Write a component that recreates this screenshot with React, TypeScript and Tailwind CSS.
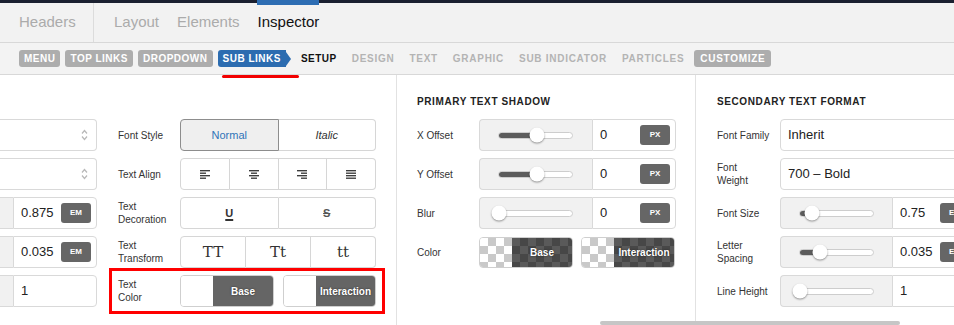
import { FC, ReactNode } from "react";

const navPills: { label: string; kind: "pill" | "active" | "current" | "text" }[] = [
  { label: "MENU", kind: "pill" },
  { label: "TOP LINKS", kind: "pill" },
  { label: "DROPDOWN", kind: "pill" },
  { label: "SUB LINKS", kind: "active" },
  { label: "SETUP", kind: "current" },
  { label: "DESIGN", kind: "text" },
  { label: "TEXT", kind: "text" },
  { label: "GRAPHIC", kind: "text" },
  { label: "SUB INDICATOR", kind: "text" },
  { label: "PARTICLES", kind: "text" },
  { label: "CUSTOMIZE", kind: "pill" },
];

const Label: FC<{ children: ReactNode; w?: string }> = ({ children, w = "w-[62px]" }) => (
  <div className={`${w} shrink-0 text-[10px] leading-[13px] text-[#333]`}>{children}</div>
);

const Badge: FC<{ text: string }> = ({ text }) => (
  <span className="flex h-[20px] w-[30px] shrink-0 items-center justify-center rounded-[3px] bg-[#666] text-[8px] font-bold text-white">
    {text}
  </span>
);

const Slider: FC<{ pct: number; w?: string }> = ({ pct, w = "w-[113px]" }) => (
  <div className={`flex h-full ${w} shrink-0 items-center rounded-l-[4px] border border-r-0 border-[#d9d9d9] bg-[#f1f1f1] pl-[18px]`}>
    <div className="relative h-[7px] w-[75px] rounded-full border border-[#cdcdcd] bg-white">
      <div className="h-full rounded-full bg-[#5c5c5c]" style={{ width: `${pct}%` }} />
      <div
        className="absolute top-1/2 h-[15px] w-[15px] -translate-x-1/2 -translate-y-1/2 rounded-full bg-white shadow-[0_1px_2px_rgba(0,0,0,0.4)]"
        style={{ left: `${pct}%` }}
      />
    </div>
  </div>
);

const ValueBox: FC<{ value: string; badge?: string; w?: string }> = ({ value, badge, w = "w-[84px]" }) => (
  <div className={`flex h-full ${w} shrink-0 items-center justify-between rounded-r-[4px] border border-[#d9d9d9] bg-white pl-[7px] pr-[5px] text-[13px] text-[#222]`}>
    <span>{value}</span>
    {badge && <Badge text={badge} />}
  </div>
);

const Chevrons: FC = () => (
  <svg width="7" height="12" viewBox="0 0 7 12" fill="none" stroke="#b8b8b8" strokeWidth="1.2">
    <path d="M1 4.5 3.5 1.5 6 4.5" />
    <path d="M1 7.5 3.5 10.5 6 7.5" />
  </svg>
);

const AlignIcon: FC<{ mode: "left" | "center" | "right" | "justify" }> = ({ mode }) => {
  const rows = [10, 6, 10, 6];
  return (
    <svg width="10" height="9" viewBox="0 0 10 9" stroke="#333" strokeWidth="1.3">
      {rows.map((len, i) => {
        const l = mode === "justify" ? 10 : len;
        const x = mode === "left" || mode === "justify" ? 0 : mode === "right" ? 10 - l : (10 - l) / 2;
        const y = 0.7 + i * 2.5;
        return <line key={i} x1={x} y1={y} x2={x + l} y2={y} />;
      })}
    </svg>
  );
};

const Segments: FC<{ items: ReactNode[]; active?: number }> = ({ items, active }) => (
  <div className="flex h-full w-[196px] shrink-0">
    {items.map((item, i) => {
      const first = i === 0;
      const last = i === items.length - 1;
      const on = i === active;
      return (
        <div
          key={i}
          className={`flex flex-1 items-center justify-center border-y border-r ${first ? "rounded-l-[4px] border-l" : ""} ${
            last ? "rounded-r-[4px]" : ""
          } ${on ? "border-l border-[#8d8d8d] bg-[#efefef]" : "border-[#d6d6d6] bg-white"}`}
        >
          {item}
        </div>
      );
    })}
  </div>
);

const checkerLight =
  "bg-[image:conic-gradient(#c9c9c9_25%,#ffffff_0_50%,#c9c9c9_0_75%,#ffffff_0)] bg-[length:16px_16px]";
const checkerDark =
  "bg-[image:conic-gradient(#474747_25%,#5a5a5a_0_50%,#474747_0_75%,#5a5a5a_0)] bg-[length:16px_16px]";

const Swatch: FC<{ text: string; checker?: boolean; w?: string }> = ({ text, checker, w = "w-[94px]" }) => (
  <div className={`flex h-full ${w} shrink-0 overflow-hidden rounded-[4px] border border-[#cfcfcf]`}>
    <div className={`w-[32px] shrink-0 ${checker ? checkerLight : "bg-white"}`} />
    <div
      className={`flex flex-1 items-center justify-center text-[10px] font-bold text-white [text-shadow:0_0_2px_rgba(0,0,0,0.6)] ${
        checker ? checkerDark : "bg-[#656565]"
      }`}
    >
      {text}
    </div>
  </div>
);

const CutSelect: FC = () => (
  <div className="flex h-full w-[97px] items-center justify-end rounded-r-[4px] border border-l-0 border-[#d9d9d9] bg-white pr-[8px]">
    <Chevrons />
  </div>
);

const CutNumber: FC<{ value: string; badge?: string }> = ({ value, badge }) => (
  <div className="flex h-full w-[97px]">
    <div className="w-[13px] border-y border-[#d9d9d9] bg-[#f1f1f1]" />
    <ValueBox value={value} badge={badge} />
  </div>
);

const Row: FC<{ children: ReactNode }> = ({ children }) => (
  <div className="flex h-[32px] items-center">{children}</div>
);

const Title: FC<{ children: ReactNode }> = ({ children }) => (
  <div className="h-[12px] text-[10px] font-bold leading-[12px] tracking-[0.6px] text-[#222]">{children}</div>
);

export default function App() {
  return (
    <div className="relative h-[325px] w-[954px] overflow-hidden bg-white font-['Liberation_Sans',Arial,sans-serif]">
      <div className="h-[3px] bg-[#1b2030]" />
      <div className="absolute left-[257px] top-0 h-[5px] w-[62px] bg-[#2d6db3]" />

      {/* top tabs */}
      <div className="flex h-[40px] items-center border-b border-[#d8d8d8] bg-[#f2f2f2] text-[15px]">
        <div className="flex h-full w-[94px] items-center border-r border-[#dcdcdc] pl-[19px] text-[#ababab]">Headers</div>
        <div className="flex items-center gap-[18px] pl-[20px]">
          <span className="text-[#ababab]">Layout</span>
          <span className="text-[#ababab]">Elements</span>
          <span className="text-[#111]">Inspector</span>
        </div>
      </div>

      {/* sub nav */}
      <div className="flex h-[32px] items-center gap-[5px] border-b border-[#d8d8d8] bg-[#f3f3f3] pl-[19px] text-[10px] font-bold tracking-[0.5px]">
        {navPills.map((p) => {
          if (p.kind === "pill")
            return (
              <span
                key={p.label}
                className={`flex h-[17px] items-center rounded-[3px] bg-[#adadad] text-white ${
                  p.label === "CUSTOMIZE" ? "px-[6px] tracking-[0.7px]" : "px-[5px]"
                }`}
              >
                {p.label}
              </span>
            );
          if (p.kind === "active")
            return (
              <span key={p.label} className="flex items-center">
                <span className="flex h-[17px] items-center rounded-l-[3px] bg-[#2c6cb0] px-[5px] text-white">{p.label}</span>
                <span className="h-0 w-0 border-y-[7px] border-l-[5px] border-y-transparent border-l-[#2c6cb0]" />
              </span>
            );
          return (
            <span
              key={p.label}
              className={`px-[5px] ${p.kind === "current" ? "text-[#111]" : "tracking-[0.72px] text-[#b4b4b4]"}`}
            >
              {p.label}
            </span>
          );
        })}
      </div>
      <div className="absolute left-[222px] top-[75px] h-[3px] w-[77px] rounded-full bg-[#f20000]" />

      {/* panels */}
      <div className="flex h-[250px]">
        <div className="flex w-[397px] shrink-0 flex-col gap-[7px] border-r border-[#e2e2e2] pt-[44px]">
          <Row>
            <CutSelect />
            <div className="w-[21px]" />
            <Label>Font Style</Label>
            <Segments
              active={0}
              items={[
                <span className="text-[11px] text-[#2f74b8]">Normal</span>,
                <span className="text-[11px] italic text-[#333]">Italic</span>,
              ]}
            />
          </Row>
          <Row>
            <CutSelect />
            <div className="w-[21px]" />
            <Label>Text Align</Label>
            <Segments
              items={[
                <AlignIcon mode="left" />,
                <AlignIcon mode="center" />,
                <AlignIcon mode="right" />,
                <AlignIcon mode="justify" />,
              ]}
            />
          </Row>
          <Row>
            <CutNumber value="0.875" badge="EM" />
            <div className="w-[21px]" />
            <Label>
              Text
              <br />
              Decoration
            </Label>
            <Segments
              items={[
                <span className="text-[11px] font-bold text-[#333] underline decoration-[1.5px] underline-offset-2">U</span>,
                <span className="text-[11px] font-bold text-[#555] line-through">S</span>,
              ]}
            />
          </Row>
          <Row>
            <CutNumber value="0.035" badge="EM" />
            <div className="w-[21px]" />
            <Label>
              Text
              <br />
              Transform
            </Label>
            <Segments
              items={[
                <span className="font-['DejaVu_Serif',serif] text-[15px] text-[#333]">TT</span>,
                <span className="font-['DejaVu_Serif',serif] text-[15px] text-[#333]">Tt</span>,
                <span className="font-['DejaVu_Serif',serif] text-[15px] text-[#333]">tt</span>,
              ]}
            />
          </Row>
          <Row>
            <CutNumber value="1" />
            <div className="w-[21px]" />
            <Label>
              Text
              <br />
              Color
            </Label>
            <div className="flex h-full w-[196px] gap-[9px]">
              <Swatch text="Base" />
              <Swatch text="Interaction" w="w-[93px]" />
            </div>
          </Row>
        </div>

        <div className="flex w-[299px] shrink-0 flex-col border-r border-[#e2e2e2] pl-[20px] pt-[21px]">
          <Title>PRIMARY TEXT SHADOW</Title>
          <div className="mt-[11px] flex flex-col gap-[7px]">
            <Row>
              <Label>X Offset</Label>
              <Slider pct={52} />
              <ValueBox value="0" badge="PX" />
            </Row>
            <Row>
              <Label>Y Offset</Label>
              <Slider pct={52} />
              <ValueBox value="0" badge="PX" />
            </Row>
            <Row>
              <Label>Blur</Label>
              <Slider pct={0} />
              <ValueBox value="0" badge="PX" />
            </Row>
            <Row>
              <Label>Color</Label>
              <div className="flex h-[31px] gap-[8px]">
                <Swatch text="Base" checker />
                <Swatch text="Interaction" checker />
              </div>
            </Row>
          </div>
        </div>

        <div className="flex w-[258px] shrink-0 flex-col overflow-hidden pl-[21px] pt-[21px]">
          <Title>SECONDARY TEXT FORMAT</Title>
          <div className="mt-[11px] flex flex-col gap-[7px]">
            <Row>
              <Label w="w-[63px]">Font Family</Label>
              <div className="flex h-full w-[197px] shrink-0 items-center rounded-[4px] border border-[#d9d9d9] pl-[7px] text-[13px] text-[#222]">
                Inherit
              </div>
            </Row>
            <Row>
              <Label w="w-[63px]">
                Font
                <br />
                Weight
              </Label>
              <div className="flex h-full w-[197px] shrink-0 items-center rounded-[4px] border border-[#d9d9d9] pl-[7px] text-[13px] text-[#222]">
                700 – Bold
              </div>
            </Row>
            <Row>
              <Label w="w-[63px]">Font Size</Label>
              <Slider pct={17} w="w-[112px]" />
              <ValueBox value="0.75" badge="EM" />
            </Row>
            <Row>
              <Label w="w-[63px]">
                Letter
                <br />
                Spacing
              </Label>
              <Slider pct={28} w="w-[112px]" />
              <ValueBox value="0.035" badge="EM" />
            </Row>
            <Row>
              <Label w="w-[63px]">Line Height</Label>
              <Slider pct={0} w="w-[112px]" />
              <ValueBox value="1" />
            </Row>
          </div>
        </div>
      </div>

      <div className="absolute left-[109px] top-[268px] h-[46px] w-[276px] border-[3px] border-[#ff0000]" />
      <div className="absolute bottom-0 left-[600px] h-[4px] w-[300px] rounded-full bg-[#c6c6c6]" />
    </div>
  );
}
